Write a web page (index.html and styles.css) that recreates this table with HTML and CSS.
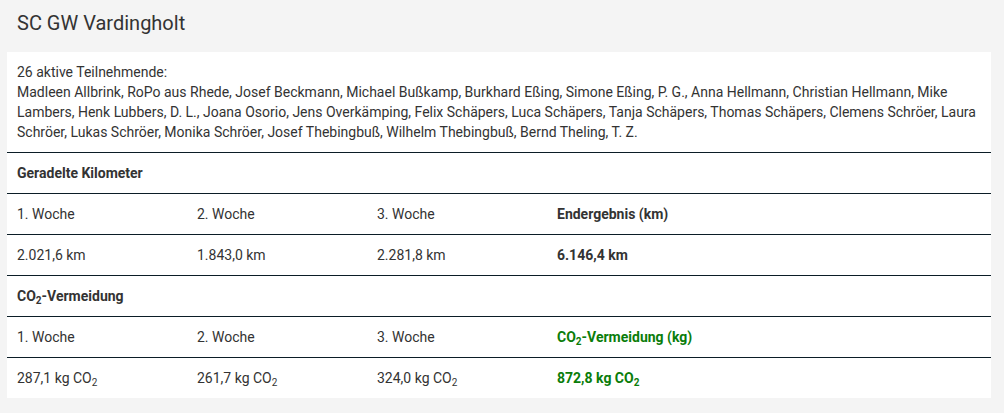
FILE: index.html
```html
<!DOCTYPE html>
<html lang="de">
<head>
<meta charset="utf-8">
<link rel="stylesheet" href="styles.css">
</head>
<body>
<h1 class="title">SC GW Vardingholt</h1>
<div class="card">
  <p class="members">26 aktive Teilnehmende:<br>Madleen Allbrink, RoPo aus Rhede, Josef Beckmann, Michael Bußkamp, Burkhard Eßing, Simone Eßing, P. G., Anna Hellmann, Christian Hellmann, Mike Lambers, Henk Lubbers, D. L., Joana Osorio, Jens Overkämping, Felix Schäpers, Luca Schäpers, Tanja Schäpers, Thomas Schäpers, Clemens Schröer, Laura Schröer, Lukas Schröer, Monika Schröer, Josef Thebingbuß, Wilhelm Thebingbuß, Bernd Theling, T. Z.</p>
  <div class="stats">
    <div class="row"><div class="cell head">Geradelte Kilometer</div></div>
    <div class="row">
      <div class="cell">1. Woche</div><div class="cell">2. Woche</div><div class="cell">3. Woche</div><div class="cell strong">Endergebnis (km)</div>
    </div>
    <div class="row">
      <div class="cell">2.021,6 km</div><div class="cell">1.843,0 km</div><div class="cell">2.281,8 km</div><div class="cell strong">6.146,4 km</div>
    </div>
    <div class="row"><div class="cell head">CO<sub>2</sub>-Vermeidung</div></div>
    <div class="row">
      <div class="cell">1. Woche</div><div class="cell">2. Woche</div><div class="cell">3. Woche</div><div class="cell strong green">CO<sub>2</sub>-Vermeidung (kg)</div>
    </div>
    <div class="row">
      <div class="cell">287,1 kg CO<sub>2</sub></div><div class="cell">261,7 kg CO<sub>2</sub></div><div class="cell">324,0 kg CO<sub>2</sub></div><div class="cell strong green">872,8 kg CO<sub>2</sub></div>
    </div>
  </div>
</div>
</body>
</html>
```
FILE: styles.css
```css
html, body {
  margin: 0;
  padding: 0;
  background: #f4f4f4;
}
body {
  font-family: Roboto, "Liberation Sans", sans-serif;
  color: #333;
  width: 1004px;
  height: 413px;
  overflow: hidden;
}
.title {
  margin: 0;
  padding: 11px 0 17px 17px;
  font-size: 20px;
  line-height: 24px;
  font-weight: 400;
  color: #333;
}
.card {
  background: #fff;
  margin-left: 7px;
  width: 984px;
}
.members {
  margin: 0;
  padding: 10px 10px;
  font-size: 14px;
  line-height: 20px;
  color: #333;
}
.stats {
  font-size: 14px;
}
.row {
  display: grid;
  grid-template-columns: 180px 180px 180px 1fr;
  border-top: 1px solid #0b1d26;
  height: 40px;
  align-items: center;
}
.cell {
  padding-left: 10px;
  line-height: 20px;
}
.head {
  grid-column: 1 / -1;
  font-weight: 700;
}
.strong {
  font-weight: 700;
}
.green {
  color: #0a7d0a;
}
sub {
  font-size: 10px;
  line-height: 0;
  vertical-align: -3px;
}
```
